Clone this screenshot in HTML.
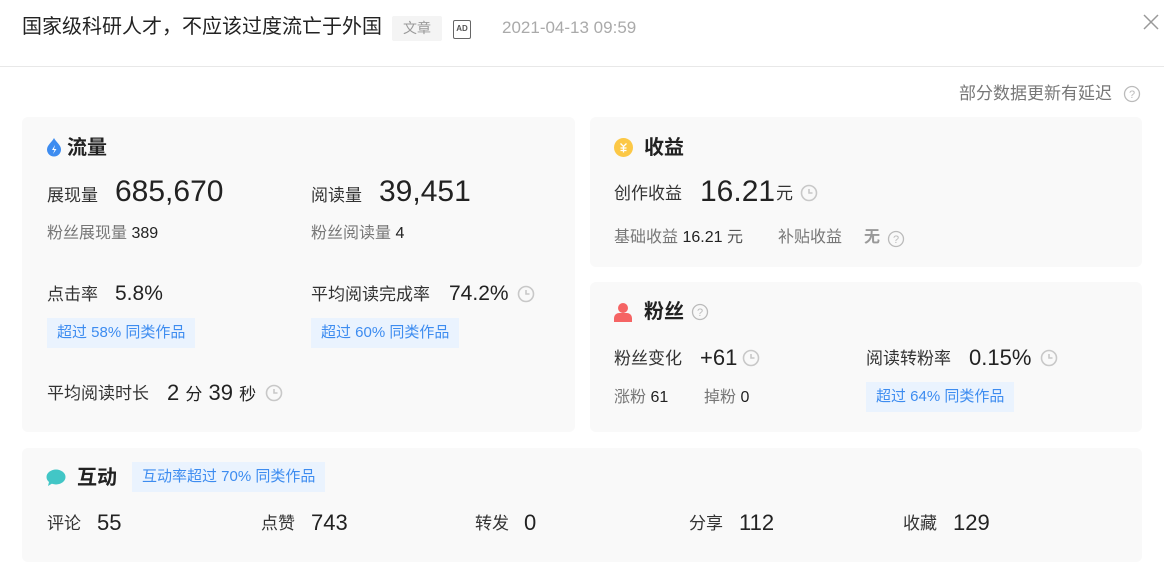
<!DOCTYPE html>
<html><head><meta charset="utf-8"><style>
*{margin:0;padding:0;box-sizing:border-box}
body{width:1164px;height:564px;background:#fff;position:relative;overflow:hidden;font-family:"Liberation Sans","Noto Sans CJK SC",sans-serif;color:#222}
.a{position:absolute;white-space:nowrap;line-height:1}
.card{position:absolute;background:#f9f9f9;border-radius:6px}
.lab{font-size:17px;color:#333}
.big{font-size:30px;color:#222}
.mid{font-size:21px;color:#222}
.sub{font-size:16px;color:#777}
.sub b{color:#222;font-weight:normal}
.h{font-size:20px;font-weight:bold;color:#222}
.tag{position:absolute;background:#eaf3fe;color:#3d8cf0;font-size:15px;line-height:30px;padding:0 10px;white-space:nowrap}
svg{position:absolute}
</style></head><body>
<div class="a" style="left:22px;top:17px;font-size:20px;color:#222">国家级科研人才，不应该过度流亡于外国</div>
<div class="a" style="left:392px;top:16px;width:50px;height:25px;background:#f4f4f4;border-radius:2px;color:#999;font-size:14px;line-height:25px;text-align:center">文章</div>
<div class="a" style="left:453px;top:20px;width:18px;height:19px;border:1.5px solid #666;border-radius:2px;font-size:8px;font-weight:bold;color:#555;line-height:16px;text-align:center">AD</div>
<div class="a" style="left:502px;top:19px;font-size:17px;color:#aaa">2021-04-13 09:59</div>
<svg style="left:1143px;top:14px" width="16" height="16"><path d="M1 1L15 15M15 1L1 15" stroke="#999" stroke-width="1.5"/></svg>
<div class="a" style="left:0;top:66px;width:1164px;height:1px;background:#e8e8e8"></div>
<div class="a" style="left:959px;top:85px;font-size:17px;color:#777">部分数据更新有延迟</div>
<svg style="left:1123px;top:85px" width="18" height="18"><circle cx="9" cy="9" r="7.5" fill="none" stroke="#bbb" stroke-width="1.3"/><text x="9" y="13" font-size="11" text-anchor="middle" fill="#bbb" font-family="Liberation Sans">?</text></svg>

<div class="card" style="left:22px;top:117px;width:553px;height:315px"></div>
<div class="card" style="left:590px;top:117px;width:552px;height:150px"></div>
<div class="card" style="left:590px;top:282px;width:552px;height:150px"></div>
<div class="card" style="left:22px;top:448px;width:1120px;height:114px"></div>

<!-- 流量 -->
<svg style="left:46px;top:137px" width="16" height="20"><path d="M8 1C6 5 1 8 1 12.5a7 7 0 0 0 14 0C15 8 10 5 8 1z" fill="#3d8cf0"/><path d="M9 8L6 13h2.5L7 17l3.5-5H8z" fill="#fff"/></svg>
<div class="a h" style="left:67px;top:138px">流量</div>
<div class="a lab" style="left:47px;top:187px">展现量</div>
<div class="a big" style="left:115px;top:177px">685,670</div>
<div class="a lab" style="left:311px;top:187px">阅读量</div>
<div class="a big" style="left:379px;top:177px">39,451</div>
<div class="a sub" style="left:47px;top:226px">粉丝展现量 <b>389</b></div>
<div class="a sub" style="left:311px;top:226px">粉丝阅读量 <b>4</b></div>
<div class="a lab" style="left:47px;top:286px">点击率</div>
<div class="a mid" style="left:115px;top:283px">5.8%</div>
<div class="a lab" style="left:311px;top:286px">平均阅读完成率</div>
<div class="a mid" style="left:449px;top:283px">74.2%</div>
<div class="tag" style="left:47px;top:318px">超过 58% 同类作品</div>
<div class="tag" style="left:311px;top:318px">超过 60% 同类作品</div>
<div class="a lab" style="left:47px;top:385px">平均阅读时长</div>
<div class="a" style="left:167px;top:382px;font-size:22px">2 <span style="font-size:17px">分</span> 39 <span style="font-size:17px">秒</span></div>

<!-- 收益 -->
<svg style="left:614px;top:138px" width="19" height="19"><circle cx="9.5" cy="9.5" r="9.5" fill="#fcc846"/><path d="M6.5 5.5l3 3 3-3M9.5 8.5v6M6.5 10h6M6.5 12.5h6" stroke="#fff" stroke-width="1.3" fill="none"/></svg>
<div class="a h" style="left:644px;top:138px">收益</div>
<div class="a lab" style="left:614px;top:185px">创作收益</div>
<div class="a big" style="left:700px;top:177px">16.21</div>
<div class="a lab" style="left:776px;top:185px">元</div>
<div class="a sub" style="left:614px;top:230px">基础收益 <b>16.21</b> <span style="color:#555">元</span></div>
<div class="a sub" style="left:778px;top:230px">补贴收益</div>
<div class="a" style="left:864px;top:230px;font-size:16px;font-weight:bold;color:#999">无</div>
<svg style="left:887px;top:230px" width="18" height="18"><circle cx="9" cy="9" r="7.5" fill="none" stroke="#bbb" stroke-width="1.3"/><text x="9" y="13" font-size="11" text-anchor="middle" fill="#bbb" font-family="Liberation Sans">?</text></svg>

<!-- 粉丝 -->
<svg style="left:614px;top:302px" width="18" height="20"><circle cx="9" cy="6" r="5" fill="#f56464"/><path d="M0 20v-4a5 5 0 0 1 5-5h8a5 5 0 0 1 5 5v4z" fill="#f56464"/></svg>
<div class="a h" style="left:644px;top:302px">粉丝</div>
<svg style="left:691px;top:303px" width="18" height="18"><circle cx="9" cy="9" r="7.5" fill="none" stroke="#bbb" stroke-width="1.3"/><text x="9" y="13" font-size="11" text-anchor="middle" fill="#bbb" font-family="Liberation Sans">?</text></svg>
<div class="a lab" style="left:614px;top:350px">粉丝变化</div>
<div class="a mid" style="left:700px;top:347px;font-size:22px">+61</div>
<div class="a lab" style="left:866px;top:350px">阅读转粉率</div>
<div class="a mid" style="left:969px;top:347px;font-size:22px">0.15%</div>
<div class="a sub" style="left:614px;top:390px">涨粉 <b>61</b></div>
<div class="a sub" style="left:704px;top:390px">掉粉 <b>0</b></div>
<div class="tag" style="left:866px;top:382px">超过 64% 同类作品</div>

<!-- 互动 -->
<svg style="left:46px;top:469px" width="20" height="18"><ellipse cx="10" cy="8" rx="9.5" ry="7.5" fill="#42c6c6"/><path d="M3 13l-1 4 5-3z" fill="#42c6c6"/></svg>
<div class="a h" style="left:77px;top:468px">互动</div>
<div class="tag" style="left:132px;top:462px">互动率超过 70% 同类作品</div>
<div class="a lab" style="left:47px;top:515px">评论</div><div class="a mid" style="left:97px;top:512px;font-size:22px">55</div>
<div class="a lab" style="left:261px;top:515px">点赞</div><div class="a mid" style="left:311px;top:512px;font-size:22px">743</div>
<div class="a lab" style="left:475px;top:515px">转发</div><div class="a mid" style="left:524px;top:512px;font-size:22px">0</div>
<div class="a lab" style="left:689px;top:515px">分享</div><div class="a mid" style="left:739px;top:512px;font-size:22px">112</div>
<div class="a lab" style="left:903px;top:515px">收藏</div><div class="a mid" style="left:953px;top:512px;font-size:22px">129</div>

<!-- clocks -->
<svg width="0" height="0"><defs><g id="ck"><circle cx="9" cy="9" r="7.5" fill="none" stroke="#c8c8c8" stroke-width="1.6"/><path d="M9 5v4h3.5" fill="none" stroke="#c8c8c8" stroke-width="1.6"/></g></defs></svg>
<svg style="left:517px;top:285px" width="18" height="18"><use href="#ck"/></svg>
<svg style="left:265px;top:384px" width="18" height="18"><use href="#ck"/></svg>
<svg style="left:800px;top:184px" width="18" height="18"><use href="#ck"/></svg>
<svg style="left:742px;top:349px" width="18" height="18"><use href="#ck"/></svg>
<svg style="left:1040px;top:349px" width="18" height="18"><use href="#ck"/></svg>
</body></html>
